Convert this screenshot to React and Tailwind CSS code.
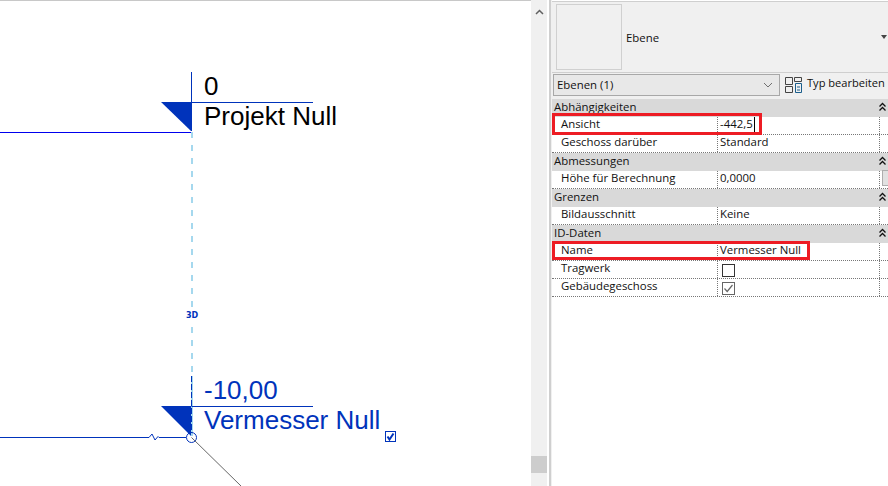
const sections = [
  { title: "Abhängigkeiten", rows: [
    { label: "Ansicht", value: "-442,5", caret: true },
    { label: "Geschoss darüber", value: "Standard" },
  ] },
  { title: "Abmessungen", rows: [{ label: "Höhe für Berechnung", value: "0,0000", button: true }] },
  { title: "Grenzen", rows: [{ label: "Bildausschnitt", value: "Keine" }] },
  { title: "ID-Daten", rows: [
    { label: "Name", value: "Vermesser Null" },
    { label: "Tragwerk", check: "off" },
    { label: "Gebäudegeschoss", check: "on" },
  ] },
];

function Collapse() {
  return (
    <svg className="mb-[3px]" width="9" height="10" viewBox="0 0 9 10" fill="none" stroke="#111" strokeWidth="1.3">
      <path d="M1.5 4.5 4.5 1.5 7.5 4.5M1.5 8.5 4.5 5.5 7.5 8.5" />
    </svg>
  );
}

function Row({ row }) {
  return (
    <div className="flex h-[18px] bg-white border-b border-dotted border-[#777]">
      <div className="w-[166px] pl-[9px] border-r border-dotted border-[#777] leading-[13px] shrink-0">{row.label}</div>
      <div className="w-[162px] pl-[2px] border-r border-dotted border-[#777] leading-[13px] shrink-0 flex items-start">
        {row.value}
        {row.caret && <span className="w-px h-[15px] bg-black ml-px" />}
        {row.check && (
          <span className={`w-[13px] h-[13px] mt-[3px] ml-[2px] border bg-white flex items-center justify-center ${row.check === "on" ? "border-[#666]" : "border-[#333]"}`}>
            {row.check === "on" && (
              <svg width="11" height="11" viewBox="0 0 11 11" fill="none" stroke="#666" strokeWidth="1.2">
                <path d="M1.5 5.5 4.2 8.5 9.5 2" />
              </svg>
            )}
          </span>
        )}
      </div>
      {row.button && <div className="ml-auto w-[6px] h-[16px] mt-[-1px] bg-[#e1e1e1] border border-[#adadad] border-r-0" />}
    </div>
  );
}

function Canvas() {
  return (
    <div className="relative flex-1 bg-white border-t border-[#c8c8c8] overflow-hidden font-['Liberation_Sans',sans-serif]">
      <svg className="absolute left-0 top-0" width="531" height="486" viewBox="0 0 531 486" fill="none" style={{ marginTop: -1 }}>
        {/* Projekt Null */}
        <path d="M191.5 72V131" stroke="#0033bb" />
        <path d="M191.5 102.5H313" stroke="#0033bb" />
        <path d="M161 102H191V131Z" fill="#0033bb" />
        <path d="M0 132.5H191" stroke="#0000ee" />
        {/* dashed link between the two levels */}
        <path d="M192 132V376" stroke="#a5d8ee" strokeWidth="2" strokeDasharray="6 7" />
        <path d="M192 376V436" stroke="#a5d8ee" strokeWidth="2" />
        {/* Vermesser Null */}
        <path d="M191.5 376V433" stroke="#0033bb" strokeDasharray="6 2" />
        <path d="M191.5 406.5H313" stroke="#0033bb" />
        <path d="M161 406H191V436Z" fill="#0033bb" />
        <path d="M0 437.5H149L152 434 155 440 158 436.500 159 437.500H186" stroke="#0033bb" />
        <circle cx="191.5" cy="437.5" r="5" stroke="#0033bb" />
        <path d="M191.5 437.5 241 486" stroke="#666" />
      </svg>

      <span className="absolute left-[186px] top-[308px] mt-px bg-white text-[8px] leading-[11px] font-bold text-[#0033bb] font-['DejaVu_Sans',sans-serif]">3D</span>
      <span className="absolute left-[204px] top-[71px] text-[26px] leading-[29px] text-black">0</span>
      <span className="absolute left-[204px] top-[101px] text-[26px] leading-[29px] text-black">Projekt Null</span>
      <span className="absolute left-[204px] top-[375px] text-[26px] leading-[29px] text-[#0033bb]">-10,00</span>
      <span className="absolute left-[204px] top-[405px] text-[26px] leading-[29px] text-[#0033bb]">Vermesser Null</span>
      <span className="absolute left-[385px] top-[430px] w-[11px] h-[11px] border border-[#0033bb] flex items-center justify-center">
        <svg width="9" height="9" viewBox="0 0 9 9" fill="none" stroke="#0033bb" strokeWidth="2">
          <path d="M1.5 4.5 3.500 7.500 7.500 1.500" />
        </svg>
      </span>
    </div>
  );
}

export default function App() {
  return (
    <div className="w-[888px] h-[486px] flex overflow-hidden bg-white">
      <Canvas />

      {/* scrollbar */}
      <div className="w-[16px] bg-[#f0f0f0] flex flex-col justify-between items-center shrink-0">
        <svg className="mt-[9px]" width="9" height="6" viewBox="0 0 9 6" fill="none" stroke="#606060" strokeWidth="1.5">
          <path d="M1 5 4.500 1.500 8 5" />
        </svg>
        <div className="w-full h-[17px] bg-[#cdcdcd] mb-[13px]" />
      </div>
      <div className="w-[2px] bg-white shrink-0" />
      <div className="w-[2px] bg-[#cfcfcf] shrink-0" />
      <div className="w-px bg-[#f0f0f0] shrink-0" />

      {/* properties */}
      <div className="w-[336px] shrink-0 bg-white text-[11.4px] text-[#111] font-['Open_Sans',sans-serif]">
        <div className="h-[72px] mt-px bg-[#f0f0f0] border-t border-b border-[#cfcfcf] flex items-center pl-[4px] pr-[1px]">
          <div className="w-[66px] h-[66px] border border-[#d0d0d0] shrink-0" />
          <span className="ml-[4px] mt-[2px]">Ebene</span>
          <span className="ml-auto w-0 h-0 border-x-[3px] border-x-transparent border-t-[4px] border-t-[#444]" />
        </div>
        <div className="h-[26px] bg-[#f0f0f0] flex items-start pt-px pl-px">
          <div className="w-[227px] h-[22px] bg-[#e8e8e8] border border-[#a8a8a8] flex items-center justify-between pl-[3px] pr-[6px]">
            <span>Ebenen (1)</span>
            <svg width="10" height="6" viewBox="0 0 10 6" fill="none" stroke="#707070">
              <path d="M1 1 5 5 9 1" />
            </svg>
          </div>
          <svg className="ml-[5px] mt-[3px] shrink-0" width="18" height="16" viewBox="0 0 18 16" fill="none" stroke="#444">
            <path d="M.5 .5H7.500V7.500H.5ZM.5 9.500H7.500V15.500H.5ZM9.500 .5H16.500V4.500H9.500Z" />
            <path d="M10.500 6.500H16.500V15.500H10.500Z" stroke="#1b5e8c" />
            <path d="M12 10H15M12 13H15" stroke="#1b5e8c" />
          </svg>
          <span className="ml-[4px] mt-[1px] text-[11.1px] whitespace-nowrap">Typ bearbeiten</span>
        </div>

        <div className="relative">
          {sections.map((s) => (
            <div key={s.title}>
              <div className="h-[18px] bg-[#d9d9d9] flex items-center justify-between pl-[2px] pr-[1px]">
                <span className="mb-[2px] leading-[14px]">{s.title}</span>
                <Collapse />
              </div>
              {s.rows.map((r) => <Row key={r.label} row={r} />)}
            </div>
          ))}
          {/* red highlights over the rows */}
          <div className="absolute left-0 top-[14px] w-[210px] h-[22px] border-[3px] border-[#ed1c24]" />
          <div className="absolute left-0 top-[142px] w-[258px] h-[19px] border-[3px] border-[#ed1c24]" />
        </div>
      </div>
    </div>
  );
}
